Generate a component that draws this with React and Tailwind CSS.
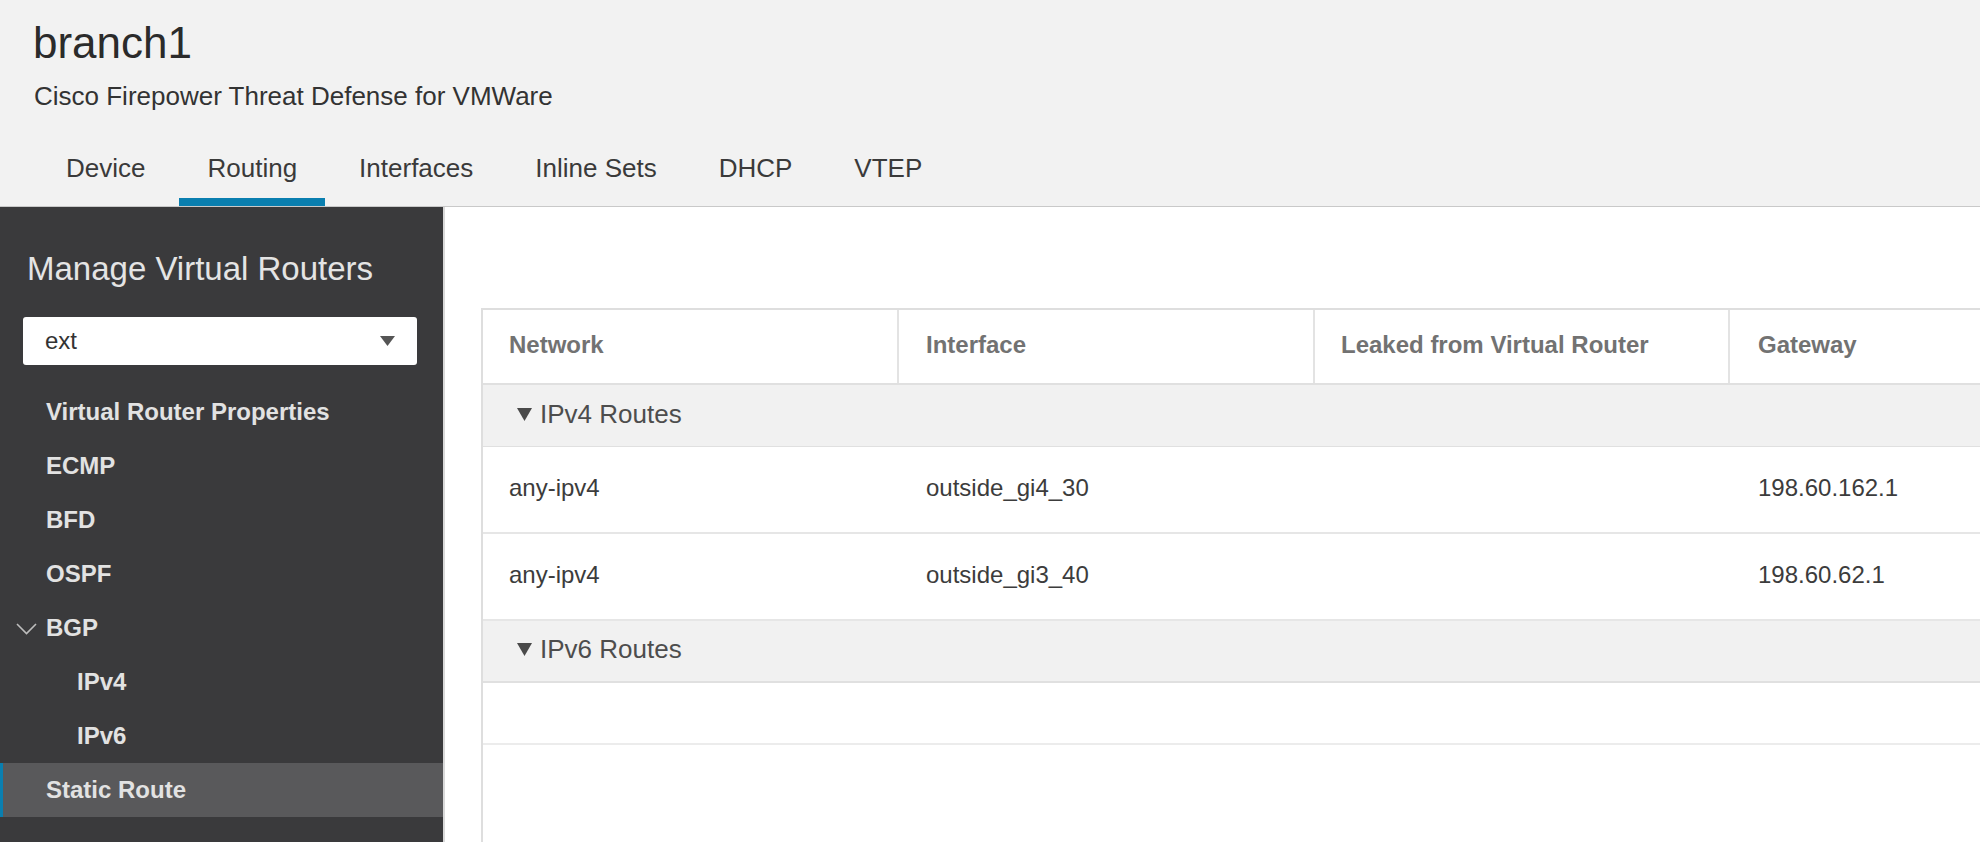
const tabs = ["Device", "Routing", "Interfaces", "Inline Sets", "DHCP", "VTEP"]

const navItems = [
    { label: "Virtual Router Properties" },
    { label: "ECMP" },
    { label: "BFD" },
    { label: "OSPF" },
    { label: "BGP", expander: true },
    { label: "IPv4", sub: true },
    { label: "IPv6", sub: true },
    { label: "Static Route", active: true },
]

const routes = [
    { network: "any-ipv4", iface: "outside_gi4_30", leaked: "", gateway: "198.60.162.1" },
    { network: "any-ipv4", iface: "outside_gi3_40", leaked: "", gateway: "198.60.62.1" },
]

const cols = "grid grid-cols-[416px_416px_415px_1fr]"

const GroupRow = ({ label, thick }) => (
    <div className={`h-[62px] flex items-center pb-[3px] pl-[34px] bg-[#f1f1f1] ${thick ? "border-b-2" : "border-b"} border-[#e0e0e0]`}>
        <svg className="mr-[8px]" width="15" height="13" viewBox="0 0 15 13"><path d="M0 0h15L7.5 13z" fill="#4a4a4a" /></svg>
        <span className="text-[26px] text-[#4d4d4d]">{label}</span>
    </div>
)

const App = () => {
    return (
        <div className="w-[1980px] h-[842px] overflow-hidden flex flex-col font-['Liberation_Sans',Arial,sans-serif]">
            {/* page header */}
            <div className="h-[207px] shrink-0 bg-[#f2f2f2] border-b border-[#c9c9c9] flex flex-col">
                <div className="pl-[33px] pt-[21px] text-[44px] leading-none text-[#2b2b2b]">branch1</div>
                <div className="pl-[34px] mt-[16px] text-[26px] leading-[30px] text-[#333]">Cisco Firepower Threat Defense for VMWare</div>
                <div className="mt-auto flex gap-[6px] pl-[38px]">
                    {tabs.map((t) => (
                        <div
                            key={t}
                            className={`h-[68px] px-[28px] flex items-center border-b-[8px] text-[26px] text-[#3a3a3a] ${t === "Routing" ? "border-[#0a7fb0]" : "border-transparent"}`}
                        >
                            {t}
                        </div>
                    ))}
                </div>
            </div>

            <div className="flex flex-1 min-h-0">
                {/* left nav */}
                <div className="w-[445px] shrink-0 bg-[#3a3a3c] border-r-2 border-[#d9d9d9] flex flex-col">
                    <div className="pl-[27px] pt-[42px] text-[33px] leading-[40px] text-[#e4e4e4]">Manage Virtual Routers</div>
                    <div className="mx-[23px] w-[394px] mt-[28px] h-[48px] bg-white rounded-[3px] flex items-center justify-between pl-[22px] pr-[22px]">
                        <span className="text-[24px] text-[#333]">ext</span>
                        <svg width="15" height="10" viewBox="0 0 15 10"><path d="M0 0h15L7.5 10z" fill="#555" /></svg>
                    </div>
                    <div className="mt-[20px] flex flex-col">
                        {navItems.map((n) => (
                            <div
                                key={n.label}
                                className={`h-[54px] flex items-center relative text-[24px] font-bold text-[#e2e2e2] ${n.sub ? "pl-[77px]" : "pl-[46px]"} ${n.active ? "bg-[#59595b] border-l-[3px] border-[#0a7fb0] !pl-[43px]" : ""}`}
                            >
                                {n.expander && (
                                    <svg className="absolute left-[16px] top-[22px]" width="21" height="12" viewBox="0 0 21 12">
                                        <polyline points="1,1 10.5,10.5 20,1" fill="none" stroke="#bdbdbd" strokeWidth="1.6" />
                                    </svg>
                                )}
                                {n.label}
                            </div>
                        ))}
                    </div>
                </div>

                {/* main */}
                <div className="flex-1 bg-white pl-[36px] pt-[101px] min-w-0">
                    <div className="border-l-2 border-t-2 border-[#dedede]">
                        <div className={`${cols} h-[75px] border-b-2 border-[#e0e0e0] text-[24px] font-bold text-[#727272]`}>
                            <div className="flex items-center pb-[3px] pl-[26px] border-r-2 border-[#e3e3e3]">Network</div>
                            <div className="flex items-center pb-[3px] pl-[27px] border-r-2 border-[#e3e3e3]">Interface</div>
                            <div className="flex items-center pb-[3px] pl-[26px] border-r-2 border-[#e3e3e3]">Leaked from Virtual Router</div>
                            <div className="flex items-center pb-[3px] pl-[28px]">Gateway</div>
                        </div>
                        <GroupRow label="IPv4 Routes" />
                        {routes.map((r, i) => (
                            <div key={i} className={`${cols} h-[87px] border-b-2 border-[#e6e6e6] text-[24px] text-[#3c3c3c]`}>
                                <div className="flex items-center pb-[4px] pl-[26px]">{r.network}</div>
                                <div className="flex items-center pb-[4px] pl-[27px]">{r.iface}</div>
                                <div className="flex items-center pb-[4px] pl-[26px]">{r.leaked}</div>
                                <div className="flex items-center pb-[4px] pl-[28px]">{r.gateway}</div>
                            </div>
                        ))}
                        <GroupRow label="IPv6 Routes" thick />
                        <div className="h-[62px] border-b-2 border-[#ececec]"></div>
                        <div className="h-[120px]"></div>
                    </div>
                </div>
            </div>
        </div>
    )
}

export default App
